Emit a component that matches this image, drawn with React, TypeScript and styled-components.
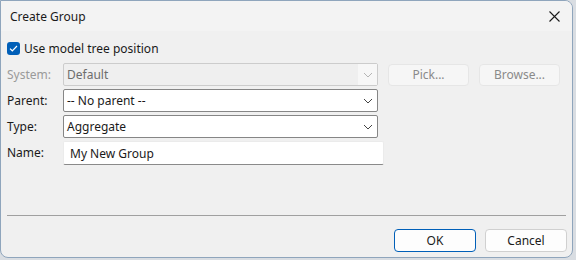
import styled, { createGlobalStyle } from "styled-components";

const Global = createGlobalStyle`
  html, body {
    margin: 0;
    padding: 0;
    background: #d9dde2;
  }
  body {
    font-family: "Segoe UI", "Noto Sans", "Liberation Sans", sans-serif;
    font-size: 12px;
    color: #1a1a1a;
  }
`;

const Window = styled.div`
  box-sizing: border-box;
  width: 573px;
  height: 258px;
  background: #f0f0f0;
  border: 1px solid #8fa5bc;
  border-radius: 0 8px 8px 8px;
  overflow: hidden;
  display: flex;
  flex-direction: column;
`;

const TitleBar = styled.div`
  height: 30px;
  background: #f3f3f3;
  display: flex;
  align-items: center;
  justify-content: space-between;
  padding: 0 12px 0 9px;
  flex-shrink: 0;
`;

const Title = styled.span`
  font-size: 12px;
  color: #1a1a1a;
`;

const CloseButton = styled.button`
  border: none;
  background: none;
  padding: 0;
  width: 12px;
  height: 12px;
  display: flex;
  align-items: center;
  justify-content: center;
`;

const Body = styled.div`
  flex: 1;
  display: flex;
  flex-direction: column;
  padding: 8px 5px 0 6px;
`;

const CheckRow = styled.label`
  display: flex;
  align-items: center;
  gap: 4px;
  height: 18px;
`;

const CheckBox = styled.span`
  width: 13px;
  height: 13px;
  border-radius: 3px;
  background: #005fb8;
  display: flex;
  align-items: center;
  justify-content: center;
`;

const Form = styled.div`
  display: grid;
  grid-template-columns: 56px auto;
  row-gap: 3px;
  margin-top: 6px;
`;

const Label = styled.span<{ $disabled?: boolean }>`
  display: flex;
  align-items: center;
  height: 23px;
  color: ${({ $disabled }) => ($disabled ? "#9a9a9a" : "#1a1a1a")};
`;

const FieldRow = styled.div`
  display: flex;
  align-items: center;
`;

const Combo = styled.div<{ $disabled?: boolean }>`
  box-sizing: border-box;
  width: 315px;
  height: 23px;
  display: flex;
  align-items: center;
  justify-content: space-between;
  border: 1px solid ${({ $disabled }) => ($disabled ? "#cccccc" : "#868686")};
  border-radius: 2px;
  background: ${({ $disabled }) => ($disabled ? "#efefef" : "#ffffff")};
  color: ${({ $disabled }) => ($disabled ? "#6d6d6d" : "#1a1a1a")};
  padding-left: 3px;
`;

const Arrow = styled.span<{ $disabled?: boolean }>`
  width: 19px;
  height: 21px;
  display: flex;
  align-items: center;
  justify-content: center;
  background: ${({ $disabled }) => ($disabled ? "#f7f7f7" : "transparent")};
`;

const SideButton = styled.button`
  box-sizing: border-box;
  height: 22px;
  width: 81px;
  margin-left: 10px;
  border: 1px solid #e6e6e6;
  border-radius: 4px;
  background: #f6f6f6;
  color: #8a8a8a;
  font: inherit;
`;

const TextInput = styled.div`
  box-sizing: border-box;
  width: 321px;
  height: 24px;
  display: flex;
  align-items: center;
  padding-left: 6px;
  background: #ffffff;
  border: 1px solid #ebebeb;
  border-bottom: 1px solid #8a8a8a;
  border-radius: 2px;
`;

const Separator = styled.hr`
  margin: 50px 0 0 0;
  border: none;
  border-top: 1px solid #a0a0a0;
  width: 559px;
`;

const Footer = styled.div`
  display: flex;
  justify-content: flex-end;
  gap: 9px;
  padding: 13px 0 0 0;
`;

const DialogButton = styled.button<{ $primary?: boolean }>`
  box-sizing: border-box;
  width: 82px;
  height: 23px;
  border-radius: 4px;
  background: #fdfdfd;
  border: 1px solid ${({ $primary }) => ($primary ? "#005fb8" : "#d0d0d0")};
  color: #1a1a1a;
  font: inherit;
`;

const Chevron = ({ color }: { color: string }) => (
  <svg width="10" height="6" viewBox="0 0 10 6">
    <path d="M1 1 L5 5 L9 1" fill="none" stroke={color} strokeWidth="1" />
  </svg>
);

const App = () => (
  <>
    <Global />
    <Window>
      <TitleBar>
        <Title>Create Group</Title>
        <CloseButton>
          <svg width="11" height="11" viewBox="0 0 11 11">
            <path d="M0.5 0.5 L10.5 10.5 M10.5 0.5 L0.5 10.5" stroke="#1a1a1a" strokeWidth="1.1" />
          </svg>
        </CloseButton>
      </TitleBar>
      <Body>
        <CheckRow>
          <CheckBox>
            <svg width="9" height="7" viewBox="0 0 9 7">
              <path d="M1 3.6 L3.3 5.8 L8 1" fill="none" stroke="#ffffff" strokeWidth="1.2" />
            </svg>
          </CheckBox>
          Use model tree position
        </CheckRow>
        <Form>
          <Label $disabled>System:</Label>
          <FieldRow>
            <Combo $disabled>
              Default
              <Arrow $disabled>
                <Chevron color="#b5b5b5" />
              </Arrow>
            </Combo>
            <SideButton>Pick...</SideButton>
            <SideButton>Browse...</SideButton>
          </FieldRow>
          <Label>Parent:</Label>
          <FieldRow>
            <Combo>
              -- No parent --
              <Arrow>
                <Chevron color="#444444" />
              </Arrow>
            </Combo>
          </FieldRow>
          <Label>Type:</Label>
          <FieldRow>
            <Combo>
              Aggregate
              <Arrow>
                <Chevron color="#444444" />
              </Arrow>
            </Combo>
          </FieldRow>
          <Label>Name:</Label>
          <FieldRow>
            <TextInput>My New Group</TextInput>
          </FieldRow>
        </Form>
        <Separator />
        <Footer>
          <DialogButton $primary>OK</DialogButton>
          <DialogButton>Cancel</DialogButton>
        </Footer>
      </Body>
    </Window>
  </>
);

export default App;
